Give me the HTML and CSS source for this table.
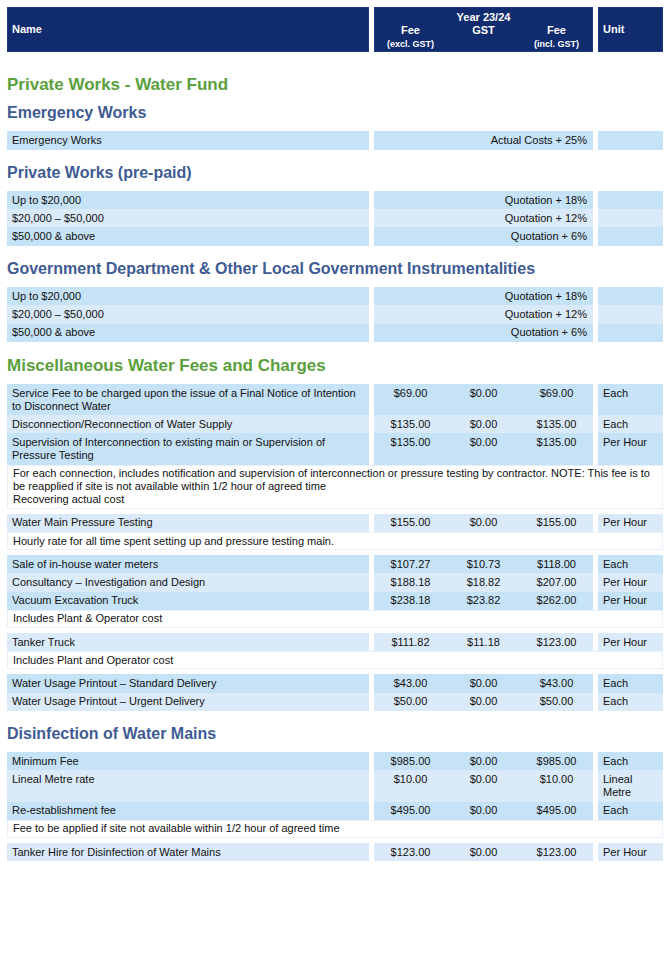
FILE: index.html
```html
<!DOCTYPE html>
<html lang="en">
<head>
<meta charset="utf-8">
<title>Fees and Charges</title>
<link rel="stylesheet" href="styles.css">
</head>
<body>
<div class="sheet">
  <div class="row head">
    <div class="c name hname">Name</div>
    <div class="fees hfees">
      <div class="year">Year 23/24</div>
      <div class="sub">
        <div class="subc">Fee<span class="sm">(excl. GST)</span></div>
        <div class="subc">GST</div>
        <div class="subc">Fee<span class="sm">(incl. GST)</span></div>
      </div>
    </div>
    <div class="c unit hunit">Unit</div>
  </div>

  <h2 class="green first">Private Works - Water Fund</h2>
  <h3 class="blue">Emergency Works</h3>
  <div class="row dark"><div class="c name">Emergency Works</div><div class="c fees span">Actual Costs + 25%</div><div class="c unit"></div></div>

  <h3 class="blue">Private Works (pre-paid)</h3>
  <div class="row dark"><div class="c name">Up to $20,000</div><div class="c fees span">Quotation + 18%</div><div class="c unit"></div></div>
  <div class="row light"><div class="c name">$20,000 – $50,000</div><div class="c fees span">Quotation + 12%</div><div class="c unit"></div></div>
  <div class="row dark"><div class="c name">$50,000 &amp; above</div><div class="c fees span">Quotation + 6%</div><div class="c unit"></div></div>

  <h3 class="blue">Government Department &amp; Other Local Government Instrumentalities</h3>
  <div class="row dark"><div class="c name">Up to $20,000</div><div class="c fees span">Quotation + 18%</div><div class="c unit"></div></div>
  <div class="row light"><div class="c name">$20,000 – $50,000</div><div class="c fees span">Quotation + 12%</div><div class="c unit"></div></div>
  <div class="row dark"><div class="c name">$50,000 &amp; above</div><div class="c fees span">Quotation + 6%</div><div class="c unit"></div></div>

  <h2 class="green">Miscellaneous Water Fees and Charges</h2>
  <div class="row dark"><div class="c name">Service Fee to be charged upon the issue of a Final Notice of Intention to Disconnect Water</div><div class="fees vals"><div>$69.00</div><div>$0.00</div><div>$69.00</div></div><div class="c unit">Each</div></div>
  <div class="row light"><div class="c name">Disconnection/Reconnection of Water Supply</div><div class="fees vals"><div>$135.00</div><div>$0.00</div><div>$135.00</div></div><div class="c unit">Each</div></div>
  <div class="row dark"><div class="c name">Supervision of Interconnection to existing main or Supervision of Pressure Testing</div><div class="fees vals"><div>$135.00</div><div>$0.00</div><div>$135.00</div></div><div class="c unit">Per Hour</div></div>
  <div class="note">For each connection, includes notification and supervision of interconnection or pressure testing by contractor. NOTE: This fee is to be reapplied if site is not available within 1/2 hour of agreed time<br>Recovering actual cost</div>
  <div class="row light"><div class="c name">Water Main Pressure Testing</div><div class="fees vals"><div>$155.00</div><div>$0.00</div><div>$155.00</div></div><div class="c unit">Per Hour</div></div>
  <div class="note">Hourly rate for all time spent setting up and pressure testing main.</div>
  <div class="row dark"><div class="c name">Sale of in-house water meters</div><div class="fees vals"><div>$107.27</div><div>$10.73</div><div>$118.00</div></div><div class="c unit">Each</div></div>
  <div class="row light"><div class="c name">Consultancy – Investigation and Design</div><div class="fees vals"><div>$188.18</div><div>$18.82</div><div>$207.00</div></div><div class="c unit">Per Hour</div></div>
  <div class="row dark"><div class="c name">Vacuum Excavation Truck</div><div class="fees vals"><div>$238.18</div><div>$23.82</div><div>$262.00</div></div><div class="c unit">Per Hour</div></div>
  <div class="note">Includes Plant &amp; Operator cost</div>
  <div class="row light"><div class="c name">Tanker Truck</div><div class="fees vals"><div>$111.82</div><div>$11.18</div><div>$123.00</div></div><div class="c unit">Per Hour</div></div>
  <div class="note">Includes Plant and Operator cost</div>
  <div class="row dark"><div class="c name">Water Usage Printout – Standard Delivery</div><div class="fees vals"><div>$43.00</div><div>$0.00</div><div>$43.00</div></div><div class="c unit">Each</div></div>
  <div class="row light"><div class="c name">Water Usage Printout – Urgent Delivery</div><div class="fees vals"><div>$50.00</div><div>$0.00</div><div>$50.00</div></div><div class="c unit">Each</div></div>

  <h3 class="blue">Disinfection of Water Mains</h3>
  <div class="row dark"><div class="c name">Minimum Fee</div><div class="fees vals"><div>$985.00</div><div>$0.00</div><div>$985.00</div></div><div class="c unit">Each</div></div>
  <div class="row light"><div class="c name">Lineal Metre rate</div><div class="fees vals"><div>$10.00</div><div>$0.00</div><div>$10.00</div></div><div class="c unit">Lineal Metre</div></div>
  <div class="row dark"><div class="c name">Re-establishment fee</div><div class="fees vals"><div>$495.00</div><div>$0.00</div><div>$495.00</div></div><div class="c unit">Each</div></div>
  <div class="note">Fee to be applied if site not available within 1/2 hour of agreed time</div>
  <div class="row light"><div class="c name">Tanker Hire for Disinfection of Water Mains</div><div class="fees vals"><div>$123.00</div><div>$0.00</div><div>$123.00</div></div><div class="c unit">Per Hour</div></div>
</div>
</body>
</html>
```

FILE: styles.css
```css
html, body {
  background: #ffffff;
}
body {
  margin: 7px;
  font-family: "Liberation Sans", Arial, sans-serif;
  font-size: 11px;
  line-height: 13px;
  color: #111111;
}
.sheet {
  width: 656px;
}
.row {
  display: grid;
  grid-template-columns: 362px 219px 65px;
  column-gap: 5px;
}
.c {
  padding: 2.6px 5px;
}
.dark > * { background: #c6e2f6; }
.light > * { background: #dbeaf8; }

.fees.span {
  text-align: right;
  padding-right: 6px;
}
.vals {
  display: grid;
  grid-template-columns: 73px 73px 73px;
  padding: 2.6px 0;
}
.vals > div {
  text-align: center;
}

/* header */
.head {
  color: #ffffff;
  font-weight: bold;
  margin-bottom: 9px;
}
.head > * {
  background: #102b6e;
  box-shadow: inset 0 0 0 1px #1c3a80;
}
.hname, .hunit {
  display: flex;
  align-items: center;
  padding-top: 0;
  padding-bottom: 0;
}
.hfees {
  padding: 4px 0 2px;
  text-align: center;
}
.year {
  line-height: 13px;
}
.sub {
  display: grid;
  grid-template-columns: 73px 73px 73px;
}
.subc {
  display: flex;
  flex-direction: column;
  align-items: center;
  line-height: 13px;
}
.sm {
  font-size: 9px;
  line-height: 11px;
  margin-top: 1.5px;
}

/* headings */
.green, .blue {
  font-weight: bold;
  margin: 13px 0 0;
}
.green {
  font-size: 17px;
  line-height: 22px;
  color: #5aa03c;
  margin-bottom: 7.4px;
}
.green.first {
  margin-top: 22px;
}
.blue {
  font-size: 16px;
  line-height: 20px;
  color: #405b93;
  margin-bottom: 8.5px;
}
.green + .blue {
  margin-top: 0;
}

/* notes */
.note {
  border: 1px solid #e8f1fb;
  background: #ffffff;
  padding: 1.6px 5px;
  margin-bottom: 5px;
}
```
